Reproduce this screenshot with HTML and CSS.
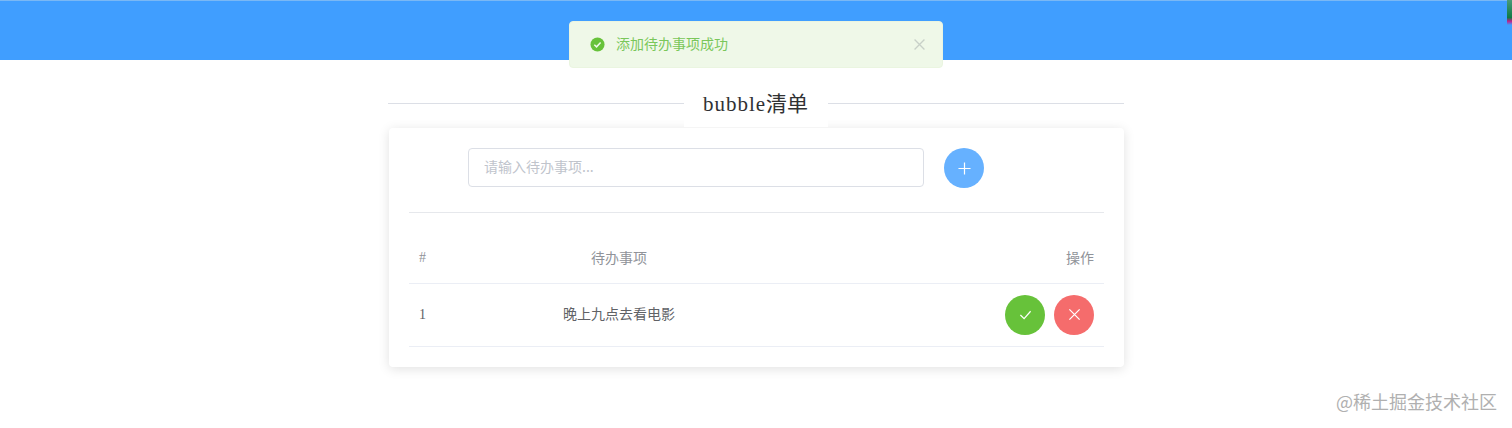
FILE: index.html
```html
<!DOCTYPE html>
<html lang="zh">
<head>
    <meta charset="UTF-8">
    <title>bubble清单</title>
    <link rel="stylesheet" href="styles.css">
</head>
<body>
    <div class="header"></div>
    <div class="corner"></div>

    <div class="message">
        <svg class="message-icon" viewBox="0 0 16 16">
            <circle cx="8" cy="8" r="7.5" fill="#67c23a"/>
            <path d="M4.6 8.2l2.4 2.3 4.3-4.6" fill="none" stroke="#f0f9eb" stroke-width="1.6"/>
        </svg>
        <span class="message-text">添加待办事项成功</span>
        <svg class="message-close" viewBox="0 0 10 10">
            <path d="M0.5 0.5l9 9M9.5 0.5l-9 9" fill="none" stroke="#c8d0c8" stroke-width="1.2"/>
        </svg>
    </div>

    <div class="container">
        <div class="divider">
            <div class="divider-line"></div>
            <h1 class="title"><span class="title-latin">bubble</span>清单</h1>
            <div class="divider-line"></div>
        </div>

        <div class="card">
            <div class="add-row">
                <input class="todo-input" type="text" placeholder="请输入待办事项...">
                <button class="round-button blue">
                    <svg viewBox="0 0 14 14"><path d="M7 0.5v13M0.5 7h13"/></svg>
                </button>
            </div>
            <div class="card-line"></div>

            <table class="todo-table">
                <thead>
                    <tr>
                        <th class="col-index">#</th>
                        <th class="col-title">待办事项</th>
                        <th class="col-action">操作</th>
                    </tr>
                </thead>
                <tbody>
                    <tr>
                        <td class="col-index">1</td>
                        <td class="col-title">晚上九点去看电影</td>
                        <td class="col-action">
                            <div class="actions">
                                <button class="round-button green">
                                    <svg viewBox="0 0 14 14"><path d="M1.5 7.5l4 4 7-8"/></svg>
                                </button>
                                <button class="round-button red">
                                    <svg viewBox="0 0 14 14"><path d="M1.5 1.5l11 11M12.5 1.5l-11 11"/></svg>
                                </button>
                            </div>
                        </td>
                    </tr>
                </tbody>
            </table>
        </div>
    </div>

    <div class="watermark">@稀土掘金技术社区</div>
</body>
</html>
```

FILE: styles.css
```css
body {
    margin: 0;
    height: 428px;
    overflow: hidden;
    background: white;
    font-family: "Liberation Serif", "Noto Sans CJK SC", serif;
}

.header {
    height: 59px;
    background: #409eff;
    border-top: 1px solid #7ab8f5;
}

.corner {
    position: absolute;
    top: 0;
    right: 0;
    width: 5px;
    height: 25px;
    background: linear-gradient(to bottom, #4a9a7a 0, #0f7a45 70%, #c0208a 85%, #409eff 100%);
}

.message {
    position: absolute;
    top: 21px;
    left: 569px;
    width: 374px;
    height: 47px;
    box-sizing: border-box;
    display: flex;
    align-items: center;
    padding: 0 17px 0 20px;
    background: #eff8e8;
    border: 1px solid #eaf5e0;
    border-radius: 4px;
    z-index: 5;
}

.message-icon {
    width: 15px;
    height: 15px;
    margin-right: 11px;
}

.message-text {
    flex: 1;
    padding-bottom: 4px;
    font-size: 14px;
    color: #7ac75a;
    font-family: "Noto Sans CJK SC", sans-serif;
}

.message-close {
    width: 11px;
    height: 11px;
}

.container {
    width: 736px;
    margin: 0 auto;
    padding-top: 20px;
}

.divider {
    display: flex;
    align-items: center;
    position: relative;
    z-index: 2;
}

.divider-line {
    flex: 1;
    height: 1px;
    background: #dcdfe6;
}

.title {
    height: 47px;
    line-height: 45px;
    margin: 0;
    padding: 0 20px 0 19px;
    background: white;
    font-size: 21px;
    font-weight: normal;
    color: #303133;
    font-family: "Noto Sans CJK SC", serif;
}

.title-latin {
    font-family: "Liberation Serif", serif;
    letter-spacing: 1px;
}

.card {
    margin: 1px 0 0 1px;
    padding: 20px;
    background: white;
    border-radius: 4px;
    box-shadow: 0 2px 12px rgba(0, 0, 0, 0.12);
}

.add-row {
    display: flex;
    gap: 20px;
    padding-left: 59px;
}

.todo-input {
    width: 456px;
    height: 39px;
    box-sizing: border-box;
    padding: 0 15px 4px;
    border: 1px solid #dcdfe6;
    border-radius: 4px;
    font-size: 14px;
    font-family: "Noto Sans CJK SC", sans-serif;
    outline: none;
}

.todo-input::placeholder {
    color: #c0c4cc;
}

.round-button {
    display: flex;
    align-items: center;
    justify-content: center;
    width: 40px;
    height: 40px;
    padding: 0;
    border: none;
    border-radius: 50%;
}

.round-button svg {
    width: 13px;
    height: 13px;
    fill: none;
    stroke: white;
    stroke-width: 1.3;
}

.blue { background: #66b1ff; }
.green { background: #67c23a; }
.red { background: #f56c6c; }

.card-line {
    height: 1px;
    margin-top: 24px;
    background: #e6e8ec;
}

.todo-table {
    width: 100%;
    margin-top: 22px;
    border-collapse: collapse;
    table-layout: fixed;
    font-size: 14px;
}

.todo-table th,
.todo-table td {
    box-sizing: border-box;
    padding: 0;
    border-bottom: 1px solid #ebeef5;
}

.todo-table th {
    height: 48px;
    padding-bottom: 1px;
    font-weight: normal;
    color: #909399;
}

.todo-table td {
    height: 63px;
    color: #606266;
}

.todo-table .col-index {
    width: 60px;
    padding-left: 10px;
    text-align: left;
}

.todo-table .col-title {
    width: 300px;
    padding-bottom: 4px;
    text-align: center;
}

.todo-table .col-action {
    padding-right: 10px;
    text-align: right;
}

.todo-table th.col-action {
    padding-bottom: 4px;
}

.actions {
    display: flex;
    justify-content: flex-end;
    gap: 9px;
}

.watermark {
    position: absolute;
    top: 388px;
    right: 15px;
    font-size: 18px;
    color: #b0b0b0;
    font-family: "Noto Sans CJK SC", sans-serif;
}
```
